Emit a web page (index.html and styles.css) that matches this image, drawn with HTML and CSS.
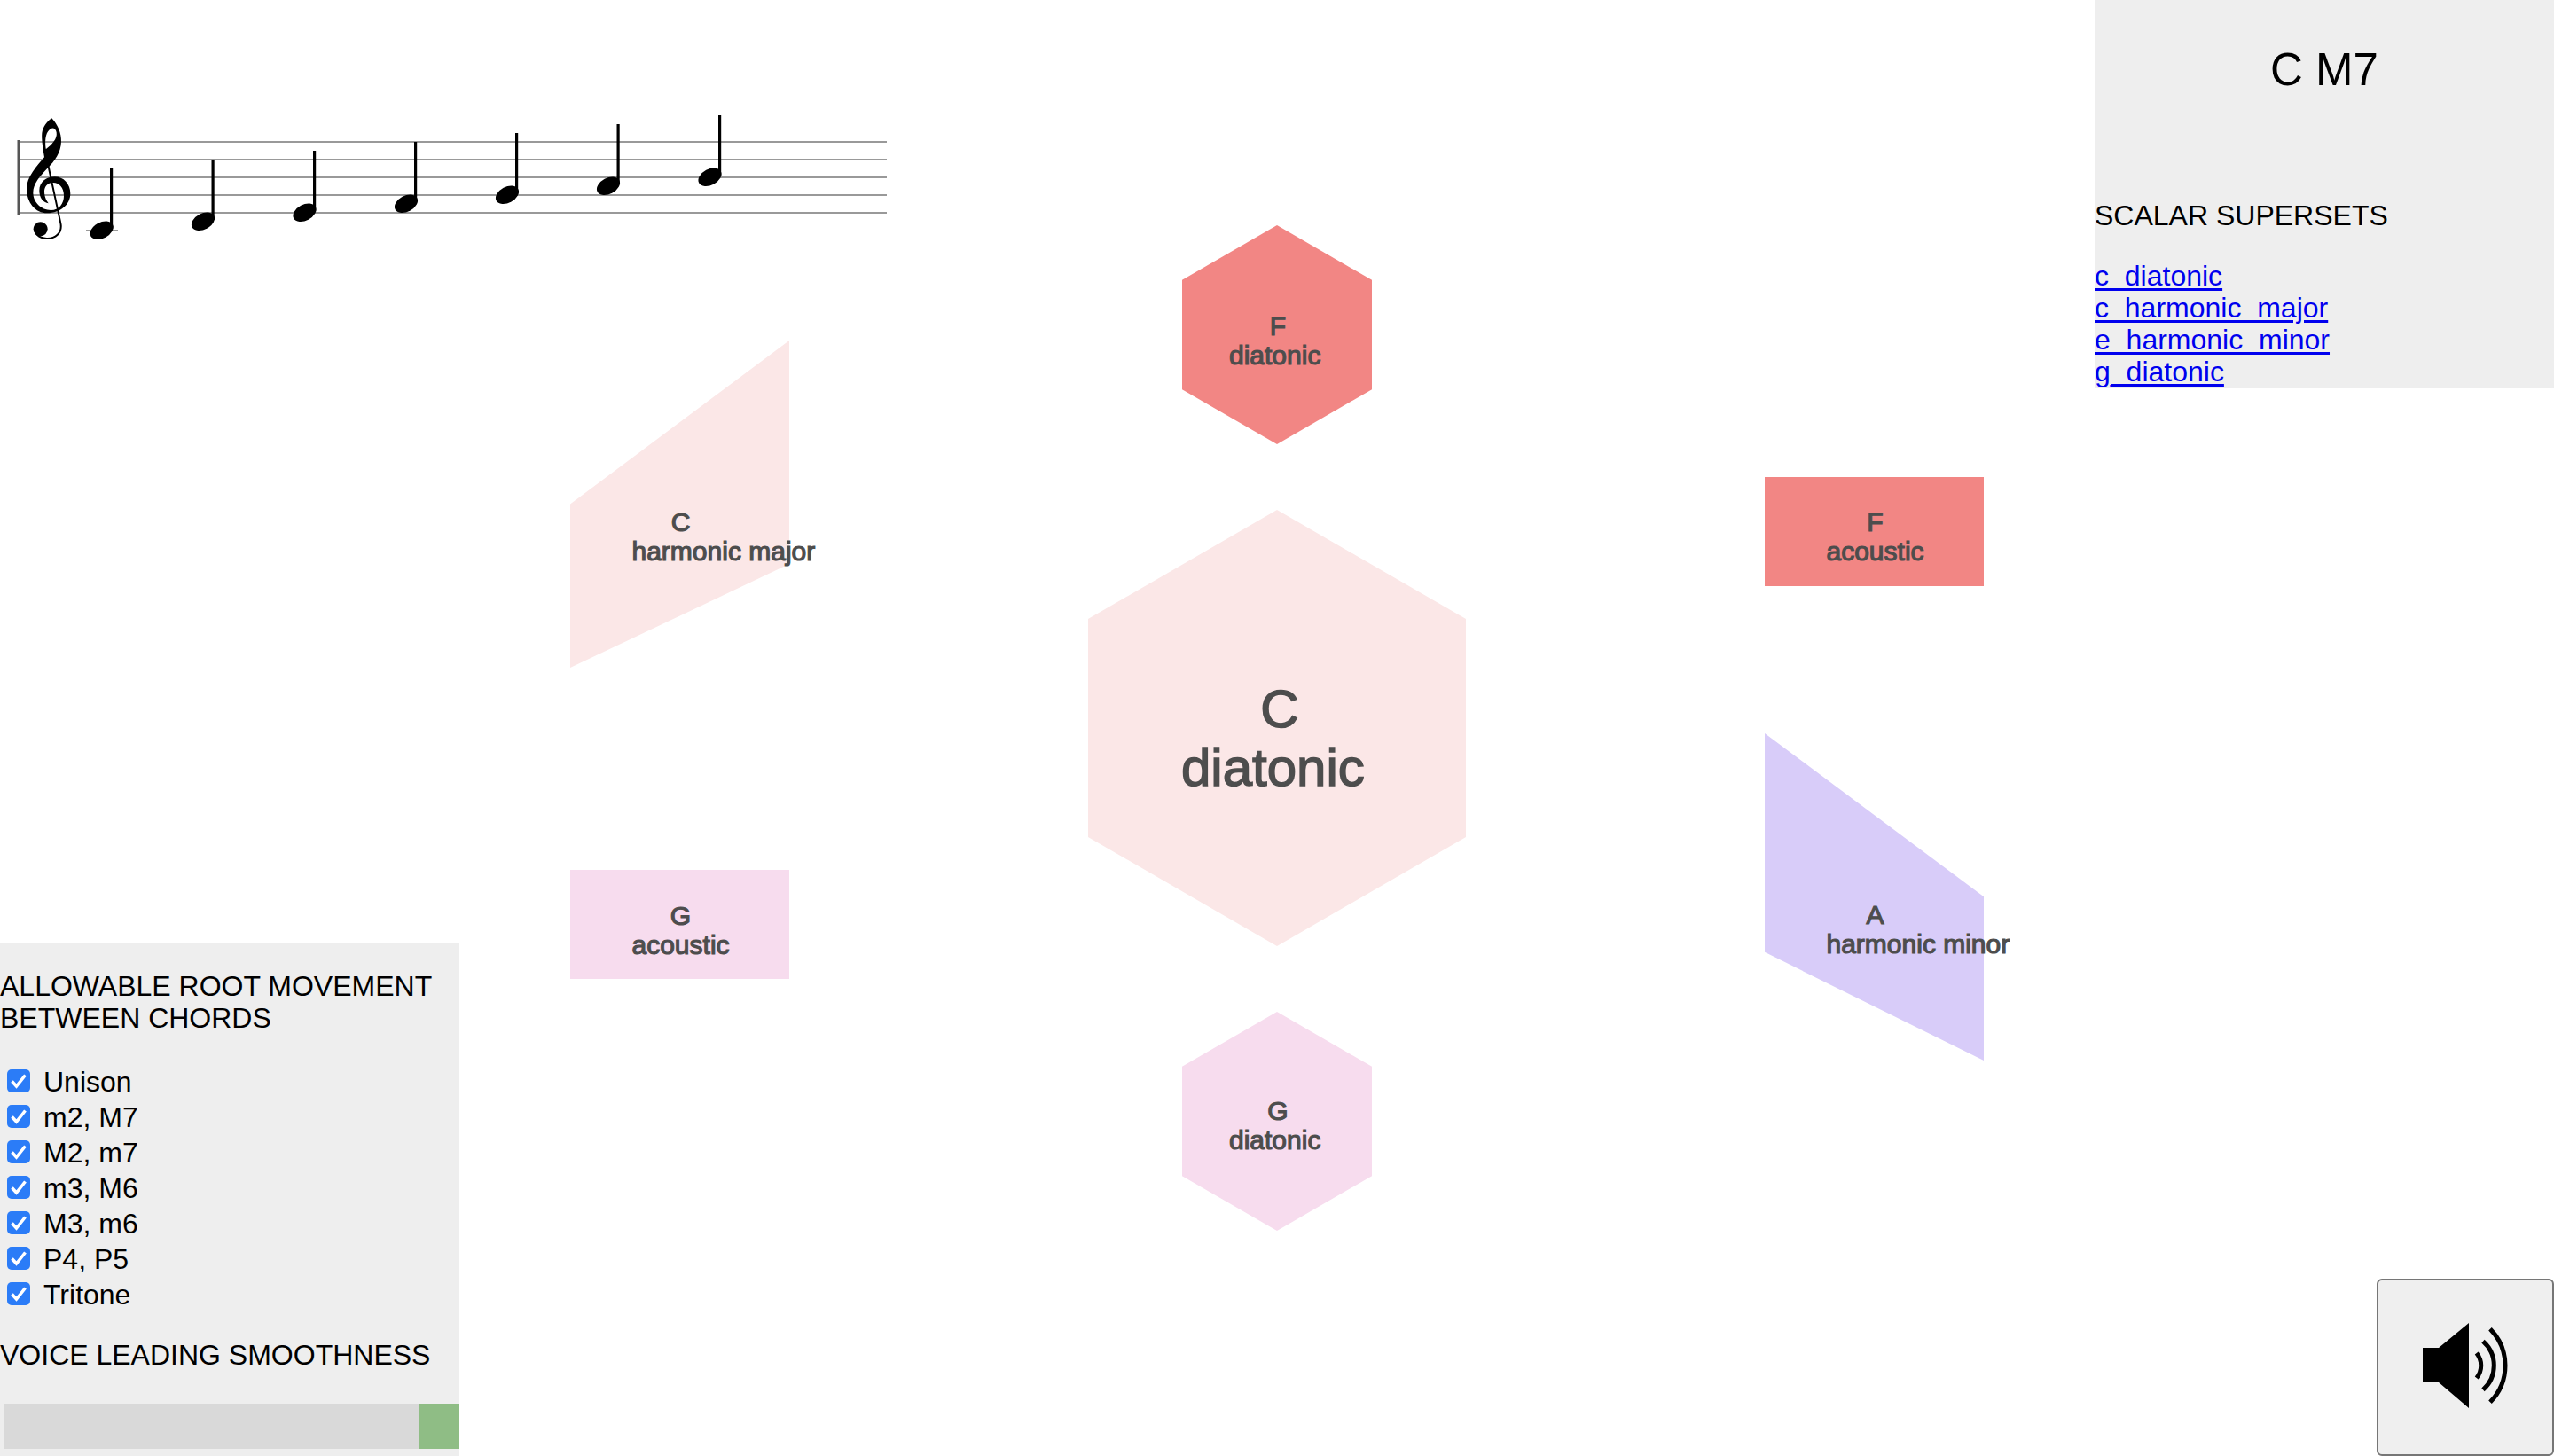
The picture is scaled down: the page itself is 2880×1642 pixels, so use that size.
FILE: index.html
```html
<!DOCTYPE html>
<html lang="en">
<head>
    <meta charset="UTF-8">
    <title>Chord Explorer</title>
    <link rel="stylesheet" href="styles.css">
</head>
<body>
<div class="page">
    <div class="left-col">
        <svg class="score" viewBox="0 120 1000 170">
            <g class="staff">
                <path d="M20 160H1000M20 180H1000M20 200H1000M20 220H1000M20 240H1000M97 260H133"/>
            </g>
            <rect class="staff-bar" x="19.5" y="158" width="3" height="84"/>
            <g transform="translate(0 100) scale(.3333)">
                <path fill-rule="evenodd" d="M175 100C195 122 208 150 207 180C206 215 185 245 162 268C135 296 112 322 112 352C112 385 140 411 172 411C200 411 216 388 216 362C216 335 200 318 180 318C160 318 150 332 150 348C150 368 160 384 165 388C145 385 133 368 133 345C133 315 158 298 185 298C215 298 238 322 238 355C238 392 205 421 160 421C120 421 90 385 90 338C90 300 125 260 150 232C145 200 140 170 142 150C145 130 158 112 175 100ZM172 135C157 145 150 165 155 205C175 190 195 170 191 148C189 136 180 130 172 135Z"/>
                <path class="clef-line" d="M148 190L205 455C212 490 185 508 158 507C130 505 115 490 118 470"/>
                <circle cx="137" cy="475" r="24"/>
            </g>
            <g>
                <ellipse cx="114.7" cy="259.7" rx="14" ry="9" transform="rotate(-28 114.7 259.7)"/>
                <rect x="124" y="190" width="3.2" height="68"/>
                <ellipse cx="229" cy="249.7" rx="14" ry="9" transform="rotate(-28 229 249.7)"/>
                <rect x="238.500" y="180" width="3.2" height="68"/>
                <ellipse cx="343.500" cy="239.7" rx="14" ry="9" transform="rotate(-28 343.5 239.7)"/>
                <rect x="353" y="170" width="3.2" height="68"/>
                <ellipse cx="458" cy="229.7" rx="14" ry="9" transform="rotate(-28 458 229.7)"/>
                <rect x="467" y="160" width="3.2" height="68"/>
                <ellipse cx="572" cy="219.7" rx="14" ry="9" transform="rotate(-28 572 219.7)"/>
                <rect x="581" y="150" width="3.2" height="68"/>
                <ellipse cx="686" cy="209.7" rx="14" ry="9" transform="rotate(-28 686 209.7)"/>
                <rect x="695.500" y="140" width="3.2" height="68"/>
                <ellipse cx="800.500" cy="199.7" rx="14" ry="9" transform="rotate(-28 800.5 199.7)"/>
                <rect x="810" y="130" width="3.2" height="68"/>
            </g>
        </svg>

        <div class="panel controls">
            <h3 class="panel-title">ALLOWABLE ROOT MOVEMENT BETWEEN CHORDS</h3>
            <div class="intervals">
                <label class="interval"><input type="checkbox" checked>Unison</label>
                <label class="interval"><input type="checkbox" checked>m2, M7</label>
                <label class="interval"><input type="checkbox" checked>M2, m7</label>
                <label class="interval"><input type="checkbox" checked>m3, M6</label>
                <label class="interval"><input type="checkbox" checked>M3, m6</label>
                <label class="interval"><input type="checkbox" checked>P4, P5</label>
                <label class="interval"><input type="checkbox" checked>Tritone</label>
            </div>
            <h3 class="panel-title smooth-title">VOICE LEADING SMOOTHNESS</h3>
            <input class="smoothness" type="range" min="0" max="10" value="10">
        </div>
    </div>

    <div class="canvas">
        <div class="node hex small-hex f-diatonic">
            <div class="shape salmon"></div>
            <div class="label"><span class="root">F</span><span class="scale">diatonic</span></div>
        </div>
        <div class="node hex big-hex c-diatonic">
            <div class="shape pale"></div>
            <div class="label big"><span class="root">C</span><span class="scale">diatonic</span></div>
        </div>
        <div class="node hex small-hex g-diatonic">
            <div class="shape pink"></div>
            <div class="label"><span class="root">G</span><span class="scale">diatonic</span></div>
        </div>
        <div class="node para-up c-major">
            <div class="shape pale"></div>
            <div class="label"><span class="root">C</span><span class="scale">harmonic major</span></div>
        </div>
        <div class="node rect g-acoustic">
            <div class="shape pink"></div>
            <div class="label"><span class="root">G</span><span class="scale">acoustic</span></div>
        </div>
        <div class="node rect f-acoustic">
            <div class="shape salmon"></div>
            <div class="label"><span class="root">F</span><span class="scale">acoustic</span></div>
        </div>
        <div class="node para-down a-minor">
            <div class="shape lavender"></div>
            <div class="label"><span class="root">A</span><span class="scale">harmonic minor</span></div>
        </div>
    </div>

    <div class="right-col">
        <div class="panel chord-info">
            <h2 class="chord-name">C M7</h2>
            <h3 class="panel-title supersets-title">SCALAR SUPERSETS</h3>
            <a class="superset" href="#">c_diatonic</a>
            <a class="superset" href="#">c_harmonic_major</a>
            <a class="superset" href="#">e_harmonic_minor</a>
            <a class="superset" href="#">g_diatonic</a>
        </div>
        <button class="sound-btn" type="button" aria-label="Play sound">
            <svg viewBox="-1 -1 200 200">
                <path d="M51 77H69L103 49V145L69 116H51Z"/>
                <path class="wave" d="M111.7 83A22 22 0 0 1 111.7 111"/>
                <path class="wave" d="M119 69.700A36.400 36.400 0 0 1 119 124.300"/>
                <path class="wave" d="M127 55.700A58.700 58.700 0 0 1 127 138.300"/>
            </svg>
        </button>
    </div>
</div>
</body>
</html>
```

FILE: styles.css
```css
* {
    box-sizing: border-box;
}
body {
    margin: 0;
    background-color: #fff;
    color: #000;
    font-family: "Liberation Sans", Arial, sans-serif;
    font-size: 32px;
    line-height: 36px;
}
.page {
    display: grid;
    grid-template-columns: 518px 1fr 518px;
    height: 100vh;
    overflow: hidden;
}

/* left column */
.left-col {
    display: flex;
    flex-direction: column;
    justify-content: space-between;
    min-width: 0;
}
.score {
    display: block;
    flex: none;
    width: 1000px;
    height: 170px;
    margin-top: 120px;
}
.staff path {
    fill: none;
    stroke: #999;
    stroke-width: 2;
}
.staff-bar {
    fill: #555;
}
.clef-line {
    fill: none;
    stroke: #000;
    stroke-width: 6;
}
.panel {
    background-color: #eee;
}
.panel-title {
    margin: 0;
    font-size: 32px;
    font-weight: normal;
}
.controls {
    padding-top: 30px;
    padding-bottom: 8px;
}
.intervals {
    margin-top: 34px;
}
.interval {
    display: flex;
    align-items: center;
    height: 40px;
    line-height: 40px;
    gap: 15px;
    padding-left: 8px;
}
.interval input {
    appearance: none;
    width: 26px;
    height: 26px;
    margin: -2px 0 0;
    border-radius: 5px;
    background: #2b7cf7 url("data:image/svg+xml,%3Csvg xmlns='http://www.w3.org/2000/svg' viewBox='0 0 26 26'%3E%3Cpath d='M5.500 13.500L10.500 19L20.500 6.500' fill='none' stroke='white' stroke-width='3.500'/%3E%3C/svg%3E");
}
.smooth-title {
    margin-top: 30px;
}
.smoothness {
    appearance: none;
    display: block;
    width: 514px;
    height: 51px;
    margin: 37px 0 0 4px;
    background-color: #d9d9d9;
}
.smoothness::-webkit-slider-thumb {
    appearance: none;
    width: 46px;
    height: 51px;
    background-color: #8fbd85;
}

/* scale graph */
.canvas {
    position: relative;
}
.node {
    position: absolute;
}
.shape {
    width: 100%;
    height: 100%;
}
.salmon { background-color: #f28684; }
.pale { background-color: #fbe7e7; }
.pink { background-color: #f7dcee; }
.lavender { background-color: #d8ccf9; }

.hex .shape {
    clip-path: polygon(50% 0, 100% 25%, 100% 75%, 50% 100%, 0 75%, 0 25%);
}
.para-up .shape {
    clip-path: polygon(0 50%, 100% 0, 100% 68.3%, 0 100%);
}
.para-down .shape {
    clip-path: polygon(0 0, 100% 49.9%, 100% 100%, 0 66.9%);
}
.small-hex { width: 214px; height: 247px; }
.big-hex { width: 426px; height: 492px; }
.rect { width: 247px; height: 123px; }
.para-up, .para-down { width: 247px; height: 369px; }

.f-diatonic { left: 815px; top: 254px; }
.c-diatonic { left: 709px; top: 575px; }
.g-diatonic { left: 815px; top: 1141px; }
.c-major { left: 125px; top: 384px; }
.g-acoustic { left: 125px; top: 981px; }
.f-acoustic { left: 1472px; top: 538px; }
.a-minor { left: 1472px; top: 827px; }

.label {
    position: absolute;
    left: 50%;
    top: 50%;
    width: 108px;
    margin-left: -54px;
    margin-top: -27px;
    font-size: 30px;
    line-height: 33px;
    color: #4d4d4d;
    -webkit-text-stroke: 1.2px #4d4d4d;
}
.para-up .label, .para-down .label {
    top: 58.3%;
}
.f-acoustic .label {
    margin-top: -28px;
}
.g-diatonic .label {
    margin-top: -29px;
}
.label.big {
    width: 216px;
    margin-left: -108px;
    margin-top: -54px;
    font-size: 60px;
    line-height: 66px;
    -webkit-text-stroke: 1.5px #4d4d4d;
}
.root, .scale {
    display: block;
    white-space: nowrap;
}
.root {
    padding-left: 2px;
    text-align: center;
}
.label.big .root {
    padding-left: 6px;
}

/* right column */
.right-col {
    display: flex;
    flex-direction: column;
    justify-content: space-between;
    align-items: flex-end;
}
.chord-info {
    width: 100%;
    height: 438px;
    padding-top: 52px;
}
.chord-name {
    margin: 0;
    font-size: 51px;
    line-height: 54px;
    font-weight: normal;
    text-align: center;
}
.supersets-title {
    margin-top: 119px;
    margin-bottom: 32px;
}
.superset {
    display: block;
    color: #0000ee;
    text-decoration-thickness: 3px;
    text-underline-offset: 3px;
}
.sound-btn {
    width: 200px;
    height: 200px;
    padding: 0;
    border: 2px solid #767676;
    border-radius: 6px;
    background-color: #efefef;
}
.sound-btn svg {
    display: block;
    width: 200px;
    height: 200px;
    margin: -2px;
}
.wave {
    fill: none;
    stroke: #000;
    stroke-width: 5;
}
```
